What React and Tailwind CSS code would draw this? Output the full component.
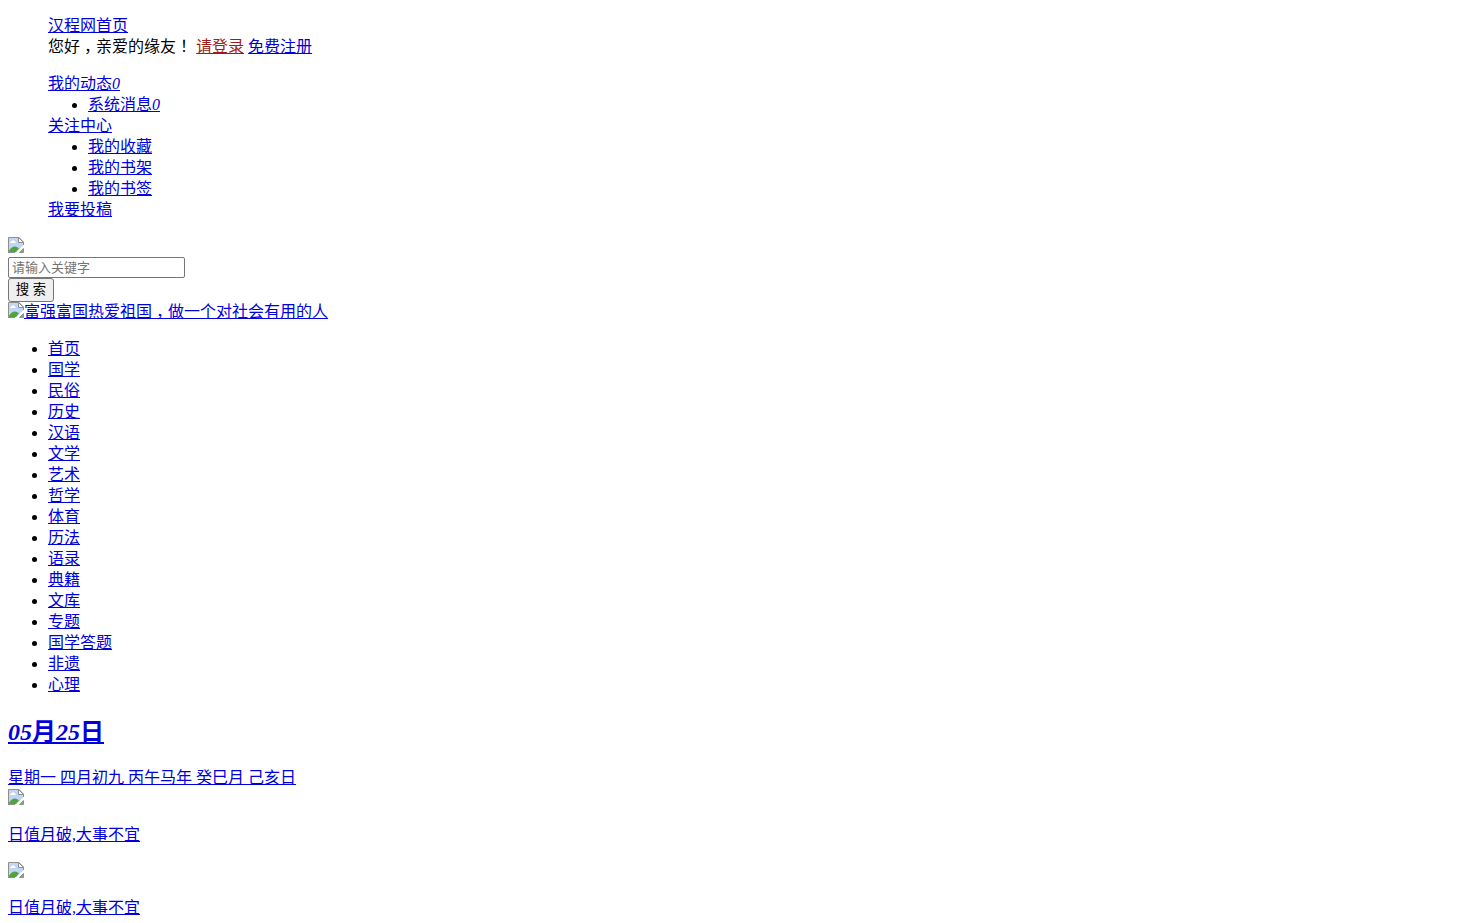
const channels = [
  '首页', '国学', '民俗', '历史', '汉语', '文学', '艺术', '哲学', '体育',
  '历法', '语录', '典籍', '文库', '专题', '国学答题', '非遗', '心理',
];

const favorites = ['我的收藏', '我的书架', '我的书签'];

function A({ children, className = 'text-[#0000de]' }) {
  return (
    <a href="#" className={`underline ${className}`}>
      {children}
    </a>
  );
}

// Placeholder for an image that failed to load
function BrokenImage({ className = 'align-baseline' }) {
  return (
    <svg width="16" height="16" viewBox="0 0 16 16" className={`inline-block ${className}`}>
      <path d="M0.5 0.5H11L15.5 5V8L7.5 15.5H0.5Z" fill="#c3d5f4" />
      <path d="M2 6C2 4.5 3.5 4.5 4 4C5 2.5 6.5 3.5 6.5 4.5C8 4.5 8 6 7.5 6Z" fill="#fff" />
      <path d="M1 15V13.5Q6 6.5 11 11.5L8 15Z" fill="#4da53c" />
      <path d="M0.5 16V0.5H11L15.5 5V8" fill="none" stroke="#8f8f8f" />
      <path d="M0 15.5H7" stroke="#8f8f8f" />
      <path d="M10.5 0.5V5.5H15.5Z" fill="#fff" stroke="#8f8f8f" />
      <path d="M7.5 16L16 8V10.5L10.5 16Z" fill="#fff" />
      <path d="M11.5 15.5L15.5 11.5V15.5Z" fill="#7fae76" stroke="#8f8f8f" />
    </svg>
  );
}

export default function App() {
  return (
    <div className="h-[923px] overflow-hidden bg-white px-2 pt-[15px] font-['Liberation_Serif','Noto_Sans_CJK_SC',serif] text-base leading-[21px] text-black">
      {/* Account links */}
      <div className="pl-10">
        <div><A>汉程网首页</A></div>
        {/* tracking pairs centre the full-width punctuation in its cell */}
        <div>
          您<span className="tracking-[4px]">好</span><span className="tracking-[-4px]">，</span>亲爱的缘<span className="tracking-[4px]">友</span><span className="tracking-[-4px]">！</span> <A className="text-[#a01c1c]">请登录</A> <A>免费注册</A>
        </div>
      </div>

      <div className="mt-4 pl-10">
        <div><A>我的动态<em>0</em></A></div>
        <ul className="list-disc pl-10">
          <li><A>系统消息<em>0</em></A></li>
        </ul>
        <div><A>关注中心</A></div>
        <ul className="list-disc pl-10">
          {favorites.map((name) => (
            <li key={name}><A>{name}</A></li>
          ))}
        </ul>
        <div><A>我要投稿</A></div>
      </div>

      {/* Logo and search */}
      <div className="mt-[17px] h-5"><BrokenImage /></div>
      <form>
        <input
          type="text"
          placeholder="请输入关键字"
          className="block h-[21px] w-[177px] rounded-[2px] border border-[#767676] px-[3px] font-['Liberation_Sans','Noto_Sans_CJK_SC',sans-serif] text-[13px] leading-[19px] placeholder:text-[#757575]"
        />
        <button
          type="button"
          className="block h-6 w-[46px] rounded-[3px] border border-[#767676] bg-[#efefef] font-['Liberation_Sans','Noto_Sans_CJK_SC',sans-serif] text-[13.333px] leading-5"
        >
          搜 索
        </button>
      </form>
      <div className="-mt-px h-[21px]">
        <A><BrokenImage className="align-[-1px]" />富强富国热爱祖<span className="tracking-[4px]">国</span><span className="tracking-[-4px]">，</span>做一个对社会有用的人</A>
      </div>

      {/* Channels */}
      <ul className="mt-4 list-disc pl-10">
        {channels.map((name) => (
          <li key={name}><A>{name}</A></li>
        ))}
      </ul>

      {/* Almanac */}
      <h2 className="mt-[21px] text-2xl leading-[33px] font-bold">
        <A><em>05</em>月<em>25</em>日</A>
      </h2>
      <div className="mt-[18px]"><A>星期一 四月初九 丙午马年 癸巳月 己亥日</A></div>
      <div className="mt-px h-5"><BrokenImage /></div>
      <p className="mt-[15px]"><A>日值月破,大事不宜</A></p>
      <div className="mt-[17px] h-5"><BrokenImage /></div>
      <p className="mt-[15px]"><A>日值月破,大事不宜</A></p>
    </div>
  );
}
